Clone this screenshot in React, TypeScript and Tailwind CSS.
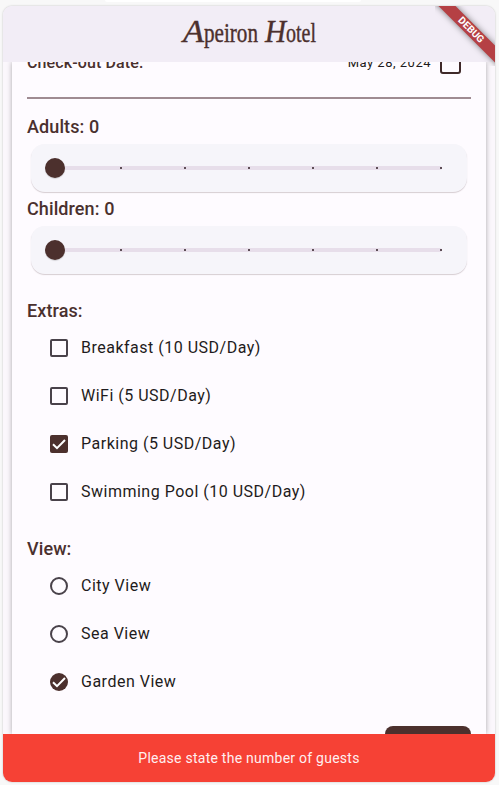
import React from "react";

const TICKS = [63, 127, 191, 255, 319, 383];

function Title({ children }: { children: React.ReactNode }) {
  return <h2 className="h-6 text-[18px] leading-6 font-medium tracking-[0.1px] text-[#4a302e]">{children}</h2>;
}

function GuestSlider({ label }: { label: string }) {
  return (
    <div className="h-[82px]">
      <Title>{label}: 0</Title>
      <div className="mx-1 mt-[5px] flex h-12 items-center rounded-[14px] bg-[#f6f5fa] pr-[25px] pl-[14px] shadow-[0_1px_1px_rgba(75,45,50,0.22)]">
        <div className="relative h-1 w-full rounded-full bg-[#e7deea]">
          <span className="absolute top-[-8px] left-0 size-5 rounded-full bg-[#4c302d] shadow-[0_1px_1px_rgba(0,0,0,0.15)]" />
          {TICKS.map((x) => (
            <span key={x} className="absolute top-px size-0.5 bg-[#5d4d56]" style={{ left: x + 12 }} />
          ))}
        </div>
      </div>
    </div>
  );
}

function Check() {
  return (
    <svg viewBox="0 0 18 18" className="size-[18px]" fill="none" stroke="white" strokeWidth="2">
      <path d="M3 9.2 7 13.2 15 5" />
    </svg>
  );
}

function Option({ label, checked = false, round = false }: { label: string; checked?: boolean; round?: boolean }) {
  return (
    <div className="flex h-12 items-center pl-[23px]">
      <span
        className={`${round ? "rounded-full" : "rounded-[2px]"} ${checked ? "bg-[#4c302d]" : "border-2 border-[#49424a]"} block size-[18px] shrink-0`}
      >
        {checked && <Check />}
      </span>
      <span className="ml-[13px] text-[16px] leading-6 tracking-[0.5px] text-[#1f1b20]">{label}</span>
    </div>
  );
}

export default function App() {
  return (
    <div className="h-[785px] w-[499px] overflow-hidden bg-[#f8f8f8] font-['Roboto',sans-serif]">
      <div className="mx-auto h-[2px] w-[256px] -translate-x-[17px] rounded-b-lg bg-white" />
      <div className="relative mt-1 ml-[3px] flex h-[776px] w-[492px] flex-col overflow-hidden rounded-[9px] bg-[#fbf7fc] shadow-[0_0_2px_rgba(0,0,0,0.25)]">
        <header className="relative z-10 flex h-14 shrink-0 items-center justify-center bg-[#f2edf6]">
          <h1 className="h-12 w-[142px]">
            <svg viewBox="0 0 142 48" className="h-12 w-[142px] fill-[#4c302d] stroke-[#4c302d] font-['Liberation_Serif',serif]" strokeWidth="0.4">
              <text y="32">
                <tspan x="5" textLength="21" lengthAdjust="spacingAndGlyphs" className="text-[32px] italic">A</tspan>
                <tspan x="26" textLength="54" lengthAdjust="spacingAndGlyphs" className="text-[27px]">peiron</tspan>{" "}
                <tspan x="87" textLength="21" lengthAdjust="spacingAndGlyphs" className="text-[32px] italic">H</tspan>
                <tspan x="108" textLength="30" lengthAdjust="spacingAndGlyphs" className="text-[27px]">otel</tspan>
              </text>
            </svg>
          </h1>
        </header>
        <main className="mx-[9px] h-[672px] shrink-0 overflow-hidden bg-[#fefbff] px-[15px] shadow-[0_0_5px_rgba(0,0,0,0.32)]">
          <div className="-mt-5 flex h-[55px] items-start">
            <span className="mt-[9px] text-[16px] leading-6 font-medium tracking-[0.12px] text-[#4a302e]">Check-out Date:</span>
            <span className="mt-[11px] ml-auto text-[13px] leading-5 tracking-[0.5px] text-[#1f1b20]">May 28, 2024</span>
            <span className="mt-[10px] mr-[10px] ml-[9px] h-[22px] w-[21px] rounded-[3px] border-2 border-[#3f2929]" />
          </div>
          <div className="h-[2px] bg-[#9f8b92]" />
          <div className="pt-4">
            <GuestSlider label="Adults" />
            <GuestSlider label="Children" />
          </div>
          <section className="pt-5">
            <Title>Extras:</Title>
            <div className="pt-px">
              <Option label="Breakfast (10 USD/Day)" />
              <Option label="WiFi (5 USD/Day)" />
              <Option label="Parking (5 USD/Day)" checked />
              <Option label="Swimming Pool (10 USD/Day)" />
            </div>
          </section>
          <section className="pt-[21px]">
            <Title>View:</Title>
            <div className="pt-px">
              <Option label="City View" round />
              <Option label="Sea View" round />
              <Option label="Garden View" round checked />
            </div>
          </section>
          <div className="mt-5 ml-auto h-10 w-[86px] rounded-lg bg-[#4c302d]" />
        </main>
        <footer className="relative z-10 flex h-12 shrink-0 items-center justify-center bg-[#f64135] text-[14px] leading-5 tracking-[0.25px] text-[#ffeff0]">
          Please state the number of guests
        </footer>
        <div className="absolute top-0 right-0 z-20 size-[60px] overflow-hidden">
          <div className="absolute top-[17.5px] left-[-14px] h-3 w-[100px] rotate-45 bg-[#b54044] text-center text-[10px] leading-3 font-bold text-white shadow-[0_0_6px_rgba(0,0,0,0.5)]">
            DEBUG
          </div>
        </div>
      </div>
    </div>
  );
}
